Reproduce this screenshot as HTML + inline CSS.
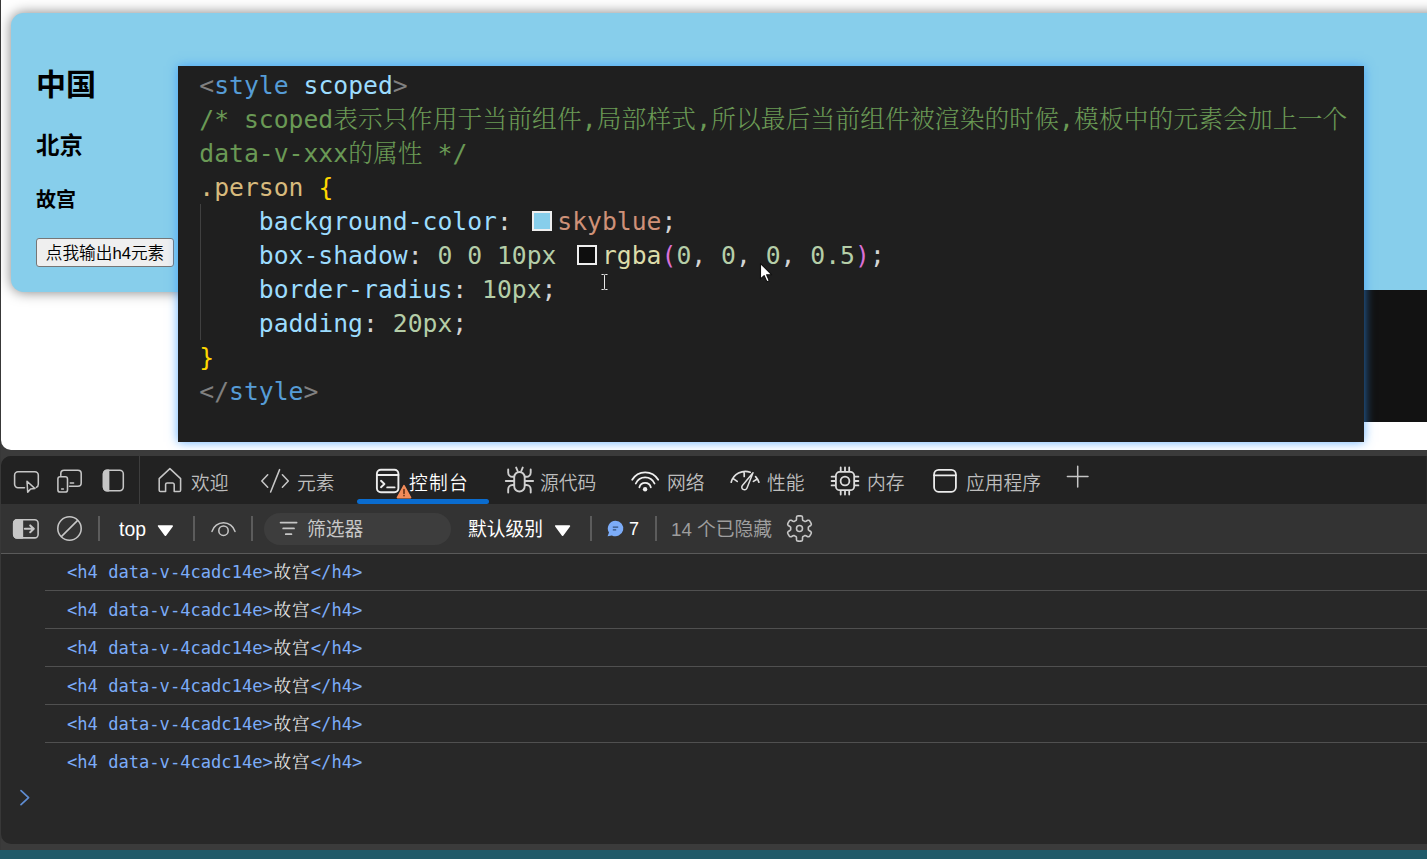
<!DOCTYPE html>
<html lang="zh-CN">
<head>
<meta charset="utf-8">
<title>scoped</title>
<style>
html,body{margin:0;padding:0;}
body{width:1427px;height:859px;overflow:hidden;position:relative;background:#3b3b3b;
  font-family:"Liberation Sans","Noto Sans CJK SC",sans-serif;}
.abs{position:absolute;}
#edge{left:0;top:0;width:1px;height:859px;background:#383838;}
#page{left:1px;top:0;width:1426px;height:450px;background:#fff;border-bottom-left-radius:10px;overflow:hidden;}
#person{left:10px;top:13px;width:1500px;height:279px;background:#87ceeb;border-radius:12.5px;
  box-shadow:0 0 12.5px rgba(0,0,0,.5);}
#person .t{position:absolute;left:25px;margin:0;font-weight:bold;color:#000;white-space:nowrap;line-height:1;}
#h2{top:57px;font-size:30px;}
#h3{top:121.5px;font-size:23.4px;}
#h4{top:177px;font-size:20px;}
#btn{position:absolute;left:25px;top:225px;width:138px;height:29px;box-sizing:border-box;background:#efefef;
  border:1.5px solid #767676;border-radius:3px;font-size:16.67px;line-height:30px;text-align:center;color:#000;white-space:nowrap;font-weight:350;}
#blk{left:1363px;top:290px;width:63px;height:132px;background:#121212;}
#code{left:177px;top:66px;width:1186px;height:376px;background:#1f1f1f;
  box-shadow:0 0 10px rgba(50,150,255,.75);
  font-family:"DejaVu Sans Mono","Noto Serif CJK SC",monospace;font-size:24.72px;color:#d4d4d4;}
#code .ln{position:absolute;left:21.3px;height:34px;line-height:34px;white-space:pre;}
#guide{position:absolute;left:21.6px;top:138px;width:1px;height:136px;background:#404040;}
.g{color:#808080}.b{color:#569cd6}.lb{color:#9cdcfe}.cm{color:#6a9955}.sel{color:#d7ba7d}
.y{color:#ffd700}.o{color:#ce9178}.n{color:#b5cea8}.f{color:#dcdcaa}.p{color:#da70d6}
.sw{display:inline-block;width:20.5px;height:20.5px;border:2px solid #eee;box-sizing:border-box;vertical-align:-1px;margin:0 4.9px 0 5.2px;}
.zh{font-weight:300;letter-spacing:0.14px;}
#dev{left:1px;top:456px;width:1426px;height:388px;background:#282828;border-radius:10px 0 0 10px;overflow:hidden;
  font-size:18.5px;color:#c7c7c7;}
#tabs{left:0;top:0;width:1425px;height:48px;background:#222;}
#tool{left:0;top:48px;width:1426px;height:50px;background:#333;border-bottom:1px solid #5a5a5a;box-sizing:border-box;}
#teal{left:0;top:850px;width:1427px;height:9px;background:#205a69;}
.row{position:absolute;left:44px;width:1382px;height:38px;border-bottom:1px solid #505050;box-sizing:border-box;
  font-family:"DejaVu Sans Mono","Noto Serif CJK SC",monospace;font-size:17.1px;line-height:39px;color:#7cacf8;white-space:pre;padding-left:22px;}
.row i{font-style:normal;color:#e3e3e3;font-size:17.6px;letter-spacing:1.1px;margin-left:0.6px;}

.sep{position:absolute;background:#5c5c5c;width:2px;top:60px;height:25px;}
.tab{position:absolute;top:16px;height:24px;line-height:24px;font-size:18.75px;color:#bdbdbd;white-space:nowrap;font-weight:350;}
.tl{position:absolute;top:61px;height:25px;line-height:25px;font-size:18.75px;color:#c7c7c7;white-space:nowrap;}
#pill{position:absolute;left:263px;top:57px;width:187px;height:32px;border-radius:16px;background:#3d3d3d;}
#uline{position:absolute;left:356px;top:43px;width:132px;height:5px;background:#0a6ccf;border-radius:3px;}
#tsep{position:absolute;left:137.5px;top:0;width:1.5px;height:48px;background:#3e3e3e;}
</style>
</head>
<body>
<div id="page" class="abs">
  <div id="person" class="abs">
    <h2 id="h2" class="t">中国</h2>
    <h3 id="h3" class="t">北京</h3>
    <h4 id="h4" class="t">故宫</h4>
    <div id="btn">点我输出h4元素</div>
  </div>
  <div id="blk" class="abs"></div>
  <div id="code" class="abs">
    <div id="guide"></div>
    <svg class="abs" style="left:422px;top:204px" width="30" height="24" viewBox="0 0 30 24"><path d="M1.5 4.5H3.5Q4.5 4.5 4.5 5.5V18.5Q4.5 19.5 3.5 19.5H1.5M7.5 4.5H5.5Q4.5 4.5 4.5 5.5M7.5 19.5H5.5Q4.5 19.5 4.5 18.5" fill="none" stroke="#e8e8e8" stroke-width="1"/></svg>
    <svg class="abs" style="left:581px;top:196px" width="16" height="22" viewBox="0 0 16 22"><path d="M1.5 1.5V17L5.2 13.6L7.9 19.8L10.3 18.7L7.6 12.7H12.6Z" fill="#fff" stroke="#111" stroke-width="1.1" stroke-linejoin="round"/></svg>
    <div class="ln" style="top:3px"><span class="g">&lt;</span><span class="b">style</span> <span class="lb">scoped</span><span class="g">&gt;</span></div>
    <div class="ln cm" style="top:37px">/* scoped<span class="zh">表示只作用于当前组件</span>,<span class="zh">局部样式</span>,<span class="zh">所以最后当前组件被渲染的时候</span>,<span class="zh">模板中的元素会加上一个</span></div>
    <div class="ln cm" style="top:71px">data-v-xxx<span class="zh">的属性</span> */</div>
    <div class="ln" style="top:105px"><span class="sel">.person</span> <span class="y">{</span></div>
    <div class="ln" style="top:139px">    <span class="lb">background-color</span>: <span class="sw" style="background:#87ceeb"></span><span class="o">skyblue</span>;</div>
    <div class="ln" style="top:173px">    <span class="lb">box-shadow</span>: <span class="n">0 0 10px</span> <span class="sw" style="background:#0e0e0e"></span><span class="f">rgba</span><span class="p">(</span><span class="n">0</span>, <span class="n">0</span>, <span class="n">0</span>, <span class="n">0.5</span><span class="p">)</span>;</div>
    <div class="ln" style="top:207px">    <span class="lb">border-radius</span>: <span class="n">10px</span>;</div>
    <div class="ln" style="top:241px">    <span class="lb">padding</span>: <span class="n">20px</span>;</div>
    <div class="ln y" style="top:275px">}</div>
    <div class="ln" style="top:309px"><span class="g">&lt;/</span><span class="b">style</span><span class="g">&gt;</span></div>
  </div>
</div>
<div id="edge" class="abs"></div>
<div id="dev" class="abs">
  <div id="tabs" class="abs"></div>
  <div id="tool" class="abs"></div>
  <div id="tsep"></div>
  <div id="uline"></div>
  <div class="tab" style="left:190px">欢迎</div>
  <div class="tab" style="left:296px">元素</div>
  <div class="tab" style="left:408px;color:#fff;letter-spacing:1.2px">控制台</div>
  <div class="tab" style="left:539px">源代码</div>
  <div class="tab" style="left:666px">网络</div>
  <div class="tab" style="left:766px">性能</div>
  <div class="tab" style="left:866px">内存</div>
  <div class="tab" style="left:965px">应用程序</div>
  <div class="sep" style="left:97px;width:1.5px"></div>
  <div class="sep" style="left:192px"></div>
  <div class="sep" style="left:250px"></div>
  <div class="sep" style="left:589px"></div>
  <div class="sep" style="left:654px"></div>
  <div id="pill"></div>
  <div class="tl" style="left:118px;color:#fff;font-size:19.4px">top</div>
  <div class="tl" style="left:306px">筛选器</div>
  <div class="tl" style="left:467px;color:#fff">默认级别</div>
  <div class="tl" style="left:628px;color:#fff;font-size:18px">7</div>
  <div class="tl" style="left:670px;color:#9e9e9e">14 个已隐藏</div>
  <div class="row" style="top:97px">&lt;h4 data-v-4cadc14e&gt;<i>故宫</i>&lt;/h4&gt;</div>
  <div class="row" style="top:135px">&lt;h4 data-v-4cadc14e&gt;<i>故宫</i>&lt;/h4&gt;</div>
  <div class="row" style="top:173px">&lt;h4 data-v-4cadc14e&gt;<i>故宫</i>&lt;/h4&gt;</div>
  <div class="row" style="top:211px">&lt;h4 data-v-4cadc14e&gt;<i>故宫</i>&lt;/h4&gt;</div>
  <div class="row" style="top:249px">&lt;h4 data-v-4cadc14e&gt;<i>故宫</i>&lt;/h4&gt;</div>
  <div class="row" style="top:287px;border-bottom:none">&lt;h4 data-v-4cadc14e&gt;<i>故宫</i>&lt;/h4&gt;</div>
</div>
<svg id="ico" class="abs" style="left:0;top:456px" width="1427" height="400" viewBox="0 456 1427 400" fill="none" stroke="#c6c6c6" stroke-width="1.55" stroke-linecap="round" stroke-linejoin="round">
  <!-- inspect -->
  <path d="M24.5 487.7H18a3.4 3.4 0 0 1-3.4-3.4V475.2a3.4 3.4 0 0 1 3.4-3.4H34.9a3.4 3.4 0 0 1 3.4 3.4V484.3a3.4 3.4 0 0 1-2 3.1"/>
  <path d="M27 481.2L27.7 492.2L30.6 488.9L35 488.6Z" stroke-width="1.5"/>
  <!-- device -->
  <path d="M60.8 475.5V473.5a3.3 3.3 0 0 1 3.3-3.3H77.9a3.3 3.3 0 0 1 3.3 3.3V482.9a3.3 3.3 0 0 1-3.3 3.3H69.5"/>
  <rect x="57.9" y="476.8" width="9.6" height="15.3" rx="2.2"/>
  <path d="M70.3 482.9H73.6M61.6 489H63.4"/>
  <!-- sidebar -->
  <rect x="103.5" y="470.2" width="19.8" height="20.5" rx="3.6"/>
  <path d="M108.6 470.2V490.7H107.1a3.6 3.6 0 0 1-3.6-3.6V473.8a3.6 3.6 0 0 1 3.6-3.6Z" fill="#c6c6c6"/>
  <!-- home -->
  <path d="M159.2 478.6L169.9 468.6L180.6 478.6V490.2a1.3 1.3 0 0 1-1.3 1.3H174.2V484.6a1.6 1.6 0 0 0-1.6-1.6H167.2a1.6 1.6 0 0 0-1.6 1.6V491.5H160.5a1.3 1.3 0 0 1-1.3-1.3Z"/>
  <!-- elements -->
  <path d="M267.7 474.8L261.8 481L267.7 487.2M279.6 469.6L270.6 492M282.4 474.8L288.3 481L282.4 487.2"/>
  <!-- console -->
  <g stroke="#ececec" stroke-width="1.9">
  <rect x="376.9" y="469.8" width="21.5" height="22.4" rx="4"/>
  <path d="M376.9 475H398.4M381 480.8L384.4 484L381 487.2M387.2 487.4H394.6"/>
  </g>
  <path d="M404 485.6L410.6 497.6H397.4Z" fill="#f28b5a" stroke="#f28b5a" stroke-width="1.6"/>
  <path d="M404 489.6V493.6M404 495.6V495.8" stroke="#5a2a10" stroke-width="1.5"/>
  <!-- bug -->
  <g stroke-width="1.9" stroke="#cfcfcf">
  <rect x="514.2" y="472" width="10.5" height="19.5" rx="5.25"/>
  <path d="M516.2 467.6L517.6 471M522.7 467.6L521.3 471M508.2 469.5V472.5a4.3 4.3 0 0 0 4.3 4.3H514M530.7 469.5V472.5a4.3 4.3 0 0 1-4.3 4.3H525M505.8 481H514M525 481H533.1M508.2 492.6V489.3a4.3 4.3 0 0 1 4.3-4.3H514M530.7 492.6V489.3a4.3 4.3 0 0 0-4.3-4.3H525"/>
  </g>
  <!-- wifi -->
  <g stroke="#f0f0f0" stroke-width="1.8">
  <path d="M632.2 479.8A15 15 0 0 1 658.2 479.8M635.8 483.5A10.2 10.2 0 0 1 654.5 483.5M639.4 487.3A5.9 5.9 0 0 1 650.8 487.3"/>
  <circle cx="645.1" cy="489.2" r="2.2" fill="#f0f0f0" stroke="none"/>
  </g>
  <!-- perf -->
  <g stroke="#e0e0e0" stroke-width="1.7">
  <path d="M731.2 482.2A14.8 14.8 0 0 1 750.2 472.2M755.6 476.6A14.8 14.8 0 0 1 758.9 482.2M733.6 478.9L737.2 481.4M744.2 471.6V476.4M756.9 479.2L753.4 481.4"/>
  <path d="M753 472.8L742.4 485.4A2.7 2.7 0 1 0 747 488.1Z" stroke-width="1.5"/>
  </g>
  <!-- memory -->
  <g stroke="#dcdcdc" stroke-width="1.8">
  <rect x="835.9" y="471.9" width="18.3" height="18.3" rx="3.8"/>
  <circle cx="845" cy="481" r="4.4"/>
  <path d="M840.7 467.4V471M845 467.4V471M849.2 467.4V471M840.7 491V494.6M845 491V494.6M849.2 491V494.6M831.6 476.7H835M831.6 481H835M831.6 485.4H835M855 476.7H858.4M855 481H858.4M855 485.4H858.4"/>
  </g>
  <!-- app -->
  <g stroke="#ececec" stroke-width="1.8">
  <rect x="934.1" y="469.8" width="21.8" height="22" rx="4.5"/>
  <path d="M934.1 475.3H955.9"/>
  </g>
  <!-- plus -->
  <path d="M1067.4 476.6H1088M1077.7 466.2V487" stroke-width="1.5"/>
  <!-- toolbar: sidebar toggle -->
  <rect x="13.7" y="519.8" width="24.4" height="18.1" rx="3.4"/>
  <path d="M22.4 519.8V537.9H17.1a3.4 3.4 0 0 1-3.4-3.4V523.2a3.4 3.4 0 0 1 3.4-3.4Z" fill="#c6c6c6"/>
  <path d="M24.8 528.8H33.6M30.2 525.4L33.8 528.8L30.2 532.3" stroke-width="2"/>
  <!-- clear -->
  <circle cx="69.5" cy="528.5" r="11.7"/>
  <path d="M61.6 536.4L77.4 520.6"/>
  <!-- eye -->
  <path d="M212 531.4A12 12 0 0 1 235 531.4"/>
  <circle cx="223.5" cy="530.7" r="4.7"/>
  <!-- filter -->
  <path d="M280.6 522.6H296.6M283.2 528.4H294M285.8 534.2H291.4" stroke-width="1.8"/>
  <!-- triangles -->
  <path d="M158.6 526L172.2 526L165.4 535.2Z" fill="#fff" stroke="#fff" stroke-width="1.6"/>
  <path d="M555.8 526L569.4 526L562.6 535.2Z" fill="#fff" stroke="#fff" stroke-width="1.6"/>
  <!-- chat -->
  <path d="M615.5 520.7a7.8 7.8 0 1 1-3.6 14.7L607.6 536.2L609 532.6A7.8 7.8 0 0 1 615.5 520.7Z" fill="#7cacf8" stroke="none"/>
  <path d="M612.8 527.1H618.2M612.8 529.9H616.2" stroke="#35507a" stroke-width="1.3" stroke-linecap="butt"/>
  <!-- gear -->
  <path d="M808.3 528.5 L808.3 528.0 L808.3 527.6 L808.4 527.1 L809.1 526.5 L810.7 525.5 L811.3 524.6 L811.3 524.0 L811.1 523.4 L810.8 522.8 L810.5 522.2 L810.1 521.6 L809.7 521.1 L809.3 520.6 L808.8 520.2 L807.7 520.3 L806.0 521.2 L805.1 521.5 L804.7 521.4 L804.3 521.1 L803.9 520.9 L803.5 520.7 L803.1 520.5 L802.7 520.1 L802.5 519.2 L802.5 517.3 L802.1 516.3 L801.5 516.0 L800.8 515.9 L800.2 515.9 L799.5 515.8 L798.8 515.9 L798.2 515.9 L797.5 516.0 L796.9 516.3 L796.5 517.3 L796.5 519.2 L796.3 520.1 L795.9 520.5 L795.5 520.7 L795.1 520.9 L794.7 521.1 L794.3 521.4 L793.9 521.5 L793.0 521.2 L791.3 520.3 L790.2 520.2 L789.7 520.6 L789.3 521.1 L788.9 521.6 L788.5 522.2 L788.2 522.8 L787.9 523.4 L787.7 524.0 L787.7 524.6 L788.3 525.5 L789.9 526.5 L790.6 527.1 L790.7 527.6 L790.7 528.0 L790.7 528.5 L790.7 529.0 L790.7 529.4 L790.6 529.9 L789.9 530.5 L788.3 531.5 L787.7 532.4 L787.7 533.0 L787.9 533.6 L788.2 534.2 L788.5 534.8 L788.9 535.4 L789.3 535.9 L789.7 536.4 L790.2 536.8 L791.3 536.7 L793.0 535.8 L793.9 535.5 L794.3 535.6 L794.7 535.9 L795.1 536.1 L795.5 536.3 L795.9 536.5 L796.3 536.9 L796.5 537.8 L796.5 539.7 L796.9 540.7 L797.5 541.0 L798.2 541.1 L798.8 541.1 L799.5 541.2 L800.2 541.1 L800.8 541.1 L801.5 541.0 L802.1 540.7 L802.5 539.7 L802.5 537.8 L802.7 536.9 L803.1 536.5 L803.5 536.3 L803.9 536.1 L804.3 535.9 L804.7 535.6 L805.1 535.5 L806.0 535.8 L807.7 536.7 L808.8 536.8 L809.3 536.4 L809.7 535.9 L810.1 535.4 L810.5 534.8 L810.8 534.2 L811.1 533.6 L811.3 533.0 L811.3 532.4 L810.7 531.5 L809.1 530.5 L808.4 529.9 L808.3 529.4 L808.3 529.0Z" stroke-width="1.6"/>
  <circle cx="799.5" cy="528.5" r="3"/>
  <!-- prompt -->
  <path d="M21 790.6L28.6 797.6L21 804.6" stroke="#5f8dd3" stroke-width="1.7"/>
</svg>
<div id="teal" class="abs"></div>
</body>
</html>
